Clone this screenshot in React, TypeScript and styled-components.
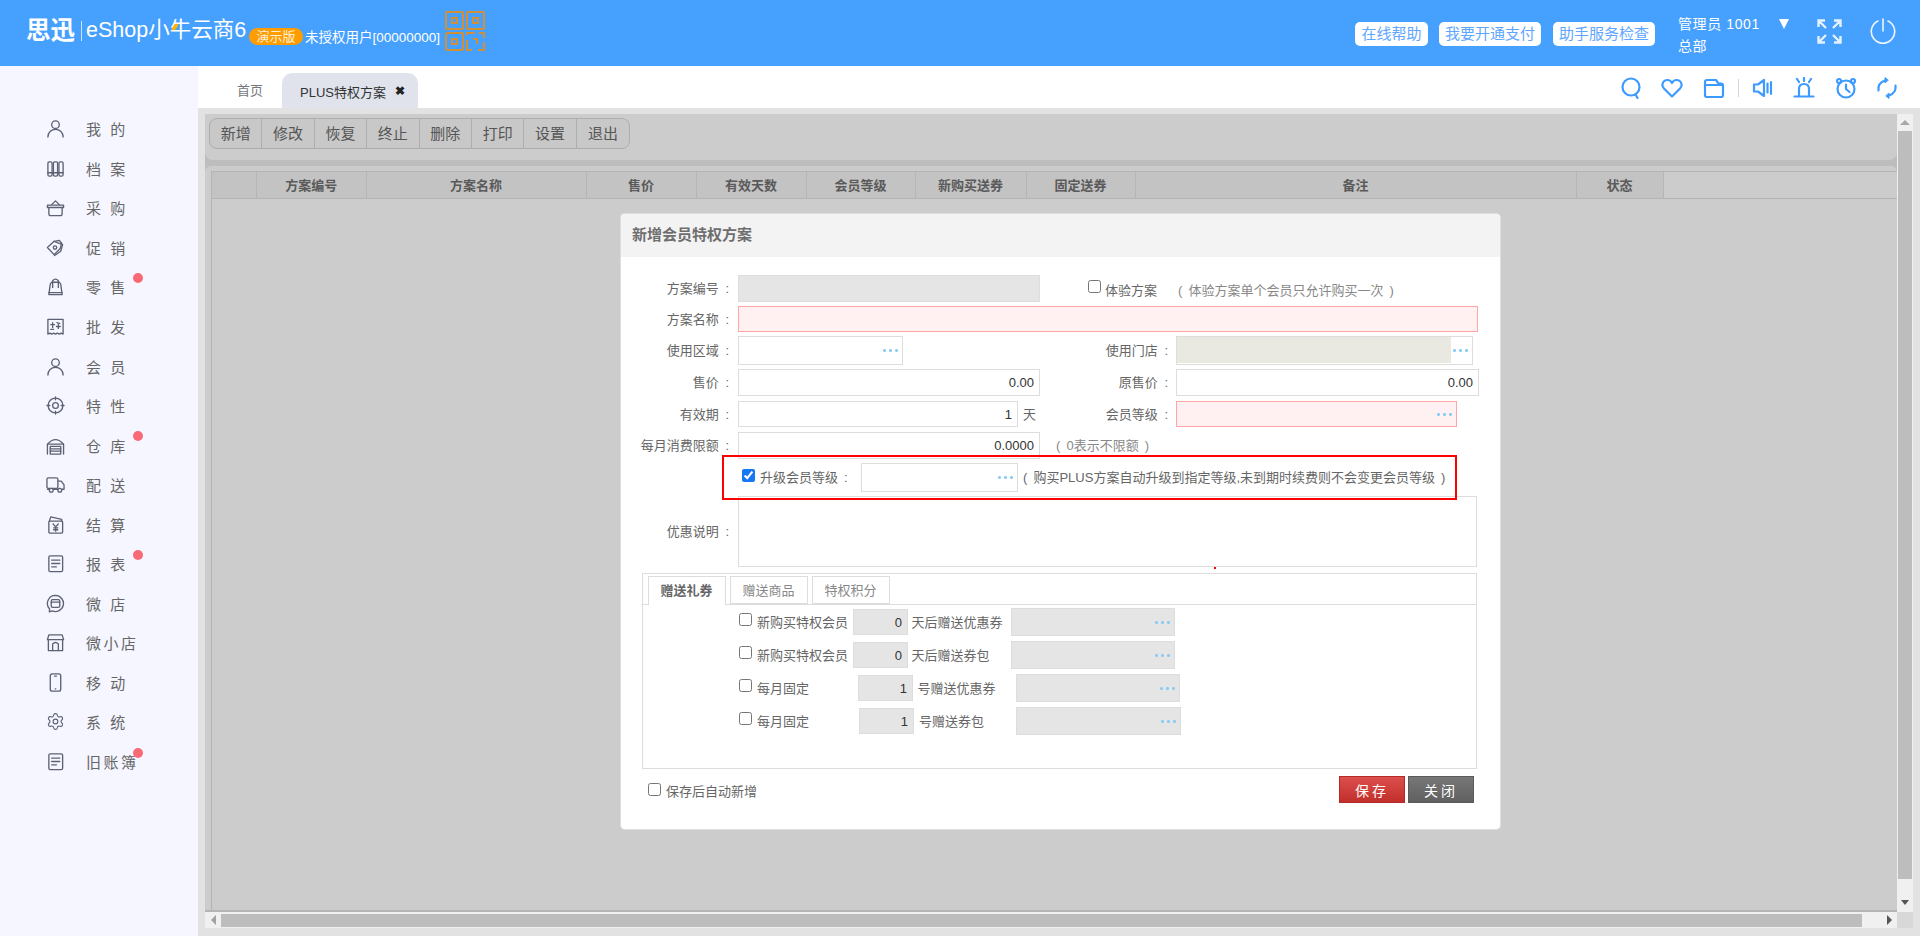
import React from "react";
import styled, { createGlobalStyle } from "styled-components";
import { Settings } from "lucide-react";

const Global = createGlobalStyle`
  html, body { margin: 0; padding: 0; height: 100%; overflow: hidden; }
  body { font-family: "Liberation Sans", "Noto Sans CJK SC", sans-serif; font-size: 13px; color: #666; }
  * { box-sizing: border-box; }
`;

const Page = styled.div`
  position: relative; width: 1920px; height: 936px; overflow: hidden;
  display: grid; grid-template-rows: 66px 1fr;
`;
const Header = styled.header`
  display: flex; align-items: center; background: #46a0fe; color: #fff; padding: 0 24px 0 26px;
`;
const Brand = styled.div`
  position: relative; display: flex; align-items: center; font-size: 21.5px; height: 66px; padding-bottom: 4px;
`;
const BrandMark = styled.span`font-size: 24.5px; font-weight: 700; line-height: 1; width: 50px; white-space: nowrap;`;
const BrandDivider = styled.i`display: block; width: 1px; height: 20px; background: rgba(255,255,255,.7); margin: 0 4px 0 5px;`;
const BrandName = styled.span`line-height: 1; white-space: nowrap; width: 162px;`;
const Spark = styled.i`
  position: absolute; left: 147px; top: 23px; width: 4px; height: 8px; background: #ffb400;
  border-radius: 4px 0 4px 0; transform: rotate(25deg);
`;
const DemoBadge = styled.span`
  margin: 6px 0 0 1px; width: 54px; height: 17px; line-height: 17px; text-align: center; border-radius: 9px;
  background: #ff9d00; font-size: 13px; color: #fff1dc;
`;
const License = styled.span`margin: 6px 0 0 2px; font-size: 13.5px; white-space: nowrap; width: 140px;`;
const QrSvg = styled.svg`display: block; margin-top: -5px;`;
const HeaderRight = styled.div`margin-left: auto; display: flex; align-items: center;`;
const HelpButton = styled.span<{ $w: number; $ml?: number }>`
  width: ${(p) => p.$w}px; margin-left: ${(p) => p.$ml ?? 0}px; height: 24px; line-height: 24px; margin-top: 2px;
  background: #fff; border-radius: 5px; color: #5ea6ff; font-size: 15px; text-align: center; white-space: nowrap;
`;
const UserBlock = styled.div`
  width: 139px; margin-left: 23px; display: flex; flex-direction: column; font-size: 14px; line-height: 22px; margin-top: 4px;
`;
const UserLine = styled.div`display: flex; align-items: center; letter-spacing: .6px; white-space: nowrap;`;
const Caret = styled.i`
  margin-left: 19px; width: 0; height: 0; border-left: 5px solid transparent; border-right: 5px solid transparent; border-top: 10px solid #fff;
`;
const HeaderIcon = styled.svg<{ $ml?: number }>`display: block; margin-left: ${(p) => p.$ml ?? 0}px; margin-top: -4px;`;

const Body = styled.div`display: flex; min-height: 0;`;
const Sidebar = styled.nav`width: 198px; flex: none; background: #f5f6ff; padding-top: 43px;`;
const NavItem = styled.div`
  position: relative; display: flex; align-items: center; height: 39.56px; padding-left: 46px;
  font-size: 15px; letter-spacing: 2.5px; color: #666; white-space: pre;
`;
const NavIconBox = styled.svg`
  width: 19px; height: 19px; flex: none; margin-right: 21px; fill: none; stroke: #5d6173; stroke-width: 1.4;
  stroke-linecap: round; stroke-linejoin: round;
`;
const NavLucide = styled.span`display: flex; width: 19px; flex: none; margin-right: 21px; color: #5d6173;`;
const NavDot = styled.i`
  position: absolute; left: 133px; top: 6px; width: 10px; height: 10px; border-radius: 50%; background: #f96a75;
`;

const Main = styled.main`flex: 1; min-width: 0; display: flex; flex-direction: column;`;
const TabBar = styled.div`display: flex; align-items: flex-end; height: 42px; background: #fff; padding-right: 22px;`;
const HomeTab = styled.div`width: 84px; height: 35px; line-height: 36px; padding-left: 39px; font-size: 13px; color: #777;`;
const ActiveTab = styled.div`
  width: 136px; height: 35px; display: flex; align-items: center; padding-left: 18px; background: #e0e3ec;
  border-radius: 10px 10px 0 0; font-size: 13px; color: #333; white-space: nowrap; padding-top: 1px;
`;
const TabClose = styled.b`margin-left: 9px; font-size: 12px; color: #222;`;
const Tools = styled.div`margin-left: auto; align-self: center; display: flex; align-items: center; gap: 19.5px; margin-top: 2px;`;
const ToolIcon = styled.svg`
  display: block; width: 22px; height: 22px; fill: none; stroke: #3d9bff; stroke-width: 2.2; stroke-linecap: round; stroke-linejoin: round;
`;
const ToolDivider = styled.i`display: block; width: 1px; height: 18px; background: #d5d5d5; margin: 0 -6.5px;`;

const Workspace = styled.div`
  flex: 1; min-height: 0; background: #e2e2e2; padding: 6px 7px 8px 7px;
  display: grid; grid-template-columns: 1fr 16px; grid-template-rows: 1fr 16px;
`;
const Stage = styled.div`background: #bdbdbd; display: flex; flex-direction: column; gap: 6px; min-width: 0;`;
const ToolbarPanel = styled.div`height: 46px; background: #ccc; border-radius: 0 0 8px 8px; padding: 4px;`;
const ButtonGroup = styled.div`
  display: inline-flex; height: 31px; border: 1px solid #aeaeae; border-radius: 8px; background: #c8c8c8; overflow: hidden;
`;
const ToolButton = styled.div`
  width: 52.4px; line-height: 30px; text-align: center; font-size: 15px; color: #555; border-right: 1px solid #aeaeae;
  &:last-child { border-right: 0; }
`;
const TablePanel = styled.div`
  flex: 1; background: #ccc; border-radius: 6px 6px 0 0; padding: 5px 0 0 6px; display: flex; flex-direction: column; min-height: 0;
  border-bottom: 2px solid #b4b4b4;
`;
const TableHead = styled.div`
  display: flex; height: 28px; border-top: 1px solid #b4b4b4; border-bottom: 1px solid #b4b4b4; border-left: 1px solid #b4b4b4;
`;
const HeadCell = styled.div<{ $w: number }>`
  width: ${(p) => p.$w}px; flex: none; background: #c3c3c3; border-right: 1px solid #b6b6b6; line-height: 27px;
  text-align: center; font-size: 13px; font-weight: 700; color: #5a5a5a;
`;
const TableBody = styled.div`flex: 1; border-left: 1px solid #b4b4b4;`;
const VScroll = styled.div`background: #f0f0f0; display: flex; flex-direction: column; align-items: center;`;
const ArrowBox = styled.div<{ $h?: number }>`width: 16px; height: ${(p) => p.$h ?? 17}px; flex: none; display: flex; align-items: center; justify-content: center;`;
const VThumb = styled.div`width: 14px; height: 748px; background: #bdbdbd; flex: none;`;
const ArrowUp = styled.i`border-left: 5px solid transparent; border-right: 5px solid transparent; border-bottom: 5px solid #a8a8a8;`;
const ArrowDown = styled.i`border-left: 4px solid transparent; border-right: 4px solid transparent; border-top: 5px solid #555;`;
const ArrowLeft = styled.i`border-top: 5px solid transparent; border-bottom: 5px solid transparent; border-right: 5px solid #a0a0a0;`;
const ArrowRight = styled.i`border-top: 5px solid transparent; border-bottom: 5px solid transparent; border-left: 5px solid #555;`;
const VSpacer = styled.div`flex: 1;`;
const HScroll = styled.div`background: #f0f0f0; display: flex; align-items: center;`;
const HThumb = styled.div`width: 1641px; height: 13px; background: #bdbdbd; flex: none; margin-top: 1px;`;
const Corner = styled.div`background: #d8d8d8;`;

const Modal = styled.section`
  position: absolute; left: 621px; top: 214px; width: 879px; height: 615px; background: #fff; border-radius: 4px;
  box-shadow: 0 0 0 1px #dedede; display: flex; flex-direction: column; overflow: hidden;
`;
const ModalTitle = styled.h2`
  margin: 0; height: 43px; background: #f3f3f3; padding-left: 11px; font-size: 15px; font-weight: 700; line-height: 41px; color: #6e6e6e;
`;
const Form = styled.div`padding-top: 18px; display: flex; flex-direction: column;`;
const Row = styled.div<{ $h: number; $mt?: number }>`
  display: flex; align-items: center; flex: none; height: ${(p) => p.$h}px; margin-top: ${(p) => p.$mt ?? 0}px;
`;
const Cell = styled.div`display: flex; align-items: center; width: 447px; flex: none; height: 100%;`;
const Label = styled.label<{ $w?: number }>`
  width: ${(p) => p.$w ?? 108}px; flex: none; margin-right: ${(p) => (p.$w ? 8 : 9)}px; text-align: right; font-size: 13px; color: #666;
  word-spacing: 3px; white-space: nowrap; padding-bottom: 2px;
`;
const Field = styled.input<{ $w: number; $tone?: "plain" | "gray" | "pink" }>`
  width: ${(p) => p.$w}px; height: 100%; flex: none; margin: 0; padding: 0 5px; outline: 0; text-align: right;
  font: 13px "Liberation Sans", "Noto Sans CJK SC", sans-serif; color: #333;
  background: ${(p) => (p.$tone === "gray" ? "#e5e5e5" : p.$tone === "pink" ? "#fff1f1" : "#fff")};
  border: 1px solid ${(p) => (p.$tone === "pink" ? "#ffa5a5" : "#ddd")};
`;
const Picker = styled.div<{ $w: number; $tone?: "plain" | "gray" | "pink" }>`
  width: ${(p) => p.$w}px; height: 100%; flex: none; display: flex; align-items: center;
  background: ${(p) => (p.$tone === "gray" ? "#e5e5e5" : p.$tone === "pink" ? "#fff1f1" : "#fff")};
  border: 1px solid ${(p) => (p.$tone === "pink" ? "#ffa5a5" : "#ddd")};
`;
const PickerFill = styled.div<{ $fill?: boolean }>`
  flex: 1; align-self: stretch; margin-bottom: 1px; background: ${(p) => (p.$fill ? "#e9e9e1" : "transparent")};
`;
const Dots = styled.i`
  display: block; width: 15px; height: 3px; flex: none; margin: 0 4px 0 2px;
  background: radial-gradient(circle at 1.5px 1.5px, #8accf5 1.3px, transparent 1.6px) 0 0 / 6px 3px repeat-x;
`;
const Check = styled.input.attrs({ type: "checkbox" })<{ $ml?: number }>`
  flex: none; margin: 0 ${(p) => (p.$ml !== undefined ? 4 : 5)}px 5px ${(p) => p.$ml ?? 0}px; accent-color: #1877f2;
`;
const Plain = styled.span<{ $ml?: number; $w?: number; $muted?: boolean; $low?: boolean }>`
  flex: none; margin-left: ${(p) => p.$ml ?? 0}px; ${(p) => (p.$w ? `width: ${p.$w}px;` : "")}
  font-size: 13px; white-space: nowrap; color: ${(p) => (p.$muted ? "#888" : "#666")};
  word-spacing: 2.5px; ${(p) => (p.$low ? "padding-top: 2px;" : "padding-bottom: 2px;")}
`;
const UpgradeCheck = styled.div`display: flex; align-items: center; width: 240px; padding-left: 121px; flex: none; margin-right: 0;`;
const Highlight = styled.div`
  position: absolute; left: 101px; top: 241px; width: 735px; height: 45px; border: 2px solid #f00; pointer-events: none;
`;
const Speck = styled.i`position: absolute; left: 593px; top: 353px; width: 2px; height: 2px; background: #f00;`;
const Area = styled.textarea`
  width: 739px; height: 100%; flex: none; margin: 0; padding: 4px; resize: none; outline: 0; background: #fff; border: 1px solid #ddd;
`;
const TabsBox = styled.div`
  margin: 6px 0 0 21px; width: 835px; height: 196px; border: 1px solid #ddd; flex: none;
`;
const TabStrip = styled.div`
  display: flex; gap: 4px; height: 31px; padding: 2px 0 0 4.5px; border-bottom: 1px solid #ddd;
`;
const TabItem = styled.div<{ $active?: boolean }>`
  width: 78px; height: ${(p) => (p.$active ? 29 : 28)}px; line-height: 27px; text-align: center; background: #fff;
  border: 1px solid #ddd; ${(p) => (p.$active ? "border-bottom: 0;" : "")}
  font-size: 13px; font-weight: ${(p) => (p.$active ? 700 : 400)}; color: ${(p) => (p.$active ? "#666" : "#888")};
`;
const GiftList = styled.div`display: flex; flex-direction: column; gap: 5px; padding: 3px 0 0 96px;`;
const GiftRow = styled.div`display: flex; align-items: center; height: 28px;`;
const GiftCheck = styled.div<{ $w: number }>`display: flex; align-items: center; width: ${(p) => p.$w}px; flex: none;`;
const GiftNum = styled(Field)`height: 26px; background: #e5e5e5;`;
const GiftText = styled(Plain)``;
const Footer = styled.div`
  display: flex; align-items: center; justify-content: space-between; height: 27px; margin-top: 7px; padding: 0 26px 0 27px;
`;
const FooterLeft = styled.div`display: flex; align-items: center; padding-top: 4px;`;
const FooterButtons = styled.div`display: flex; gap: 3px;`;
const ActionButton = styled.button<{ $danger?: boolean }>`
  width: 66px; height: 27px; padding: 0; border-radius: 0; font: 14px "Liberation Sans", "Noto Sans CJK SC", sans-serif;
  letter-spacing: 3px; color: #fff;
  border: 1px solid ${(p) => (p.$danger ? "#b42b29" : "#5a5a5a")};
  background: ${(p) => (p.$danger ? "linear-gradient(#dc4f4d,#c22f2b)" : "linear-gradient(#777,#606060)")};
`;

const NavIcon = ({ name }: { name: string }) => {
  const parts: Record<string, React.ReactNode> = {
    person: <><circle cx="10" cy="6" r="4" /><path d="M2 19c0-5 3.5-8 8-8s8 3 8 8" /></>,
    books: <><rect x="2" y="3" width="4.4" height="15" rx="1.5" /><rect x="7.8" y="3" width="4.4" height="15" rx="1.5" /><rect x="13.6" y="3" width="4.4" height="15" rx="1.5" /><path d="M2 14.5h16" /></>,
    basket: <><path d="M6 7l4-4 4 4" /><path d="M1.5 7.5h17v2.5h-17z" /><path d="M3 10v6.5Q3 18.5 5 18.5h10q2 0 2-2V10" /></>,
    tag: <><path d="M1.5 10L8.5 3.5 14 2.5 16.5 5.5 15 11 8.5 17.5z" /><path d="M8.5 3.5l9 3.5-2 7-6.5 4.5" /><circle cx="9.5" cy="10" r="1.8" /></>,
    bag: <><path d="M4.5 7.5L6 5.5h8l1.5 2L17 18.5H3z" /><path d="M7 11V4q3-3.5 6 0v7" /><path d="M3 16.5h14" /></>,
    bill: <><path d="M2 2.5h16v15.5l-2-1-2 1-2-1-2 1-2-1-2 1-2-1-2 1z" /><path d="M5 8h4M7 6v5M11.5 6l3 1M11 10h4M13 8v4M5 13h3" /></>,
    target: <><circle cx="10" cy="10" r="7.8" /><circle cx="10" cy="10" r="3" /><path d="M10 1v3M10 16v3M1 10h3M16 10h3" /></>,
    house: <><path d="M1.5 19V8.5Q10-1 18.5 8.5V19" /><path d="M2 8.5h16" /><rect x="4.5" y="11" width="11" height="8" /><path d="M4.5 13.5h11M4.5 16h11" /></>,
    truck: <><rect x="1" y="3" width="11.5" height="11" rx="1.5" /><path d="M12.5 6.5h3.5l3 4v4.5h-2M12.5 15H8M3 15H1.5" /><circle cx="5.5" cy="16" r="2" /><circle cx="14.5" cy="16" r="2" /></>,
    wallet: <><rect x="3" y="6.5" width="14.5" height="12.5" rx="1" /><path d="M3.5 6.5L5 2l11.5 2.5v2" /><path d="M7.5 9.5l2.7 3 2.7-3M10.2 12.5V17M8 13.5h4.4M8 15.5h4.4" /></>,
    report: <><rect x="3" y="2" width="14.5" height="16.5" rx="1.5" /><path d="M6 6.5h8.5M6 10h8.5M6 13.5h5" /></>,
    chat: <><path d="M10 1.5a8.5 8.5 0 1 1-3.5 16.3L3.5 18.8l.3-3A8.5 8.5 0 0 1 10 1.5z" /><rect x="5.5" y="6" width="9" height="8" rx="1.5" /><path d="M5.5 8.5h9" /></>,
    shop: <><path d="M3 2h14l1.5 5H1.5z" /><path d="M2.5 7v11.5h15V7" /><path d="M7 18.500V11.500q3-3 6 0v7" /></>,
    phone: <><rect x="4.500" y="1" width="11" height="18" rx="2" /><path d="M9 3.200h2M9.700 16.700h.6" /></>,
  };
  return <NavIconBox viewBox="0 0 20 20">{parts[name]}</NavIconBox>;
};

const nav = [
  ["person", "我 的", 0], ["books", "档 案", 0], ["basket", "采 购", 0], ["tag", "促 销", 0], ["bag", "零 售", 1],
  ["bill", "批 发", 0], ["person", "会 员", 0], ["target", "特 性", 0], ["house", "仓 库", 1], ["truck", "配 送", 0],
  ["wallet", "结 算", 0], ["report", "报 表", 1], ["chat", "微 店", 0], ["shop", "微小店", 0], ["phone", "移 动", 0],
  ["gear", "系 统", 0], ["report", "旧账簿", 1],
] as const;

const heads: [string, number][] = [
  ["", 45], ["方案编号", 109.5], ["方案名称", 220], ["售价", 110], ["有效天数", 110], ["会员等级", 109],
  ["新购买送券", 111], ["固定送券", 109], ["备注", 441], ["状态", 87],
];

const toolbar = ["新增", "修改", "恢复", "终止", "删除", "打印", "设置", "退出"];

const gifts = [
  { label: "新购买特权会员", cell: 114, value: "0", text: "天后赠送优惠券", ml: 3.5, tw: 99 },
  { label: "新购买特权会员", cell: 114, value: "0", text: "天后赠送券包", ml: 3.5, tw: 99 },
  { label: "每月固定", cell: 119, value: "1", text: "号赠送优惠券", ml: 4.5, tw: 98 },
  { label: "每月固定", cell: 120, value: "1", text: "号赠送券包", ml: 5, tw: 97 },
];

const QrIcon = () => (
  <QrSvg width="40" height="40" viewBox="0 0 40 40" fill="none" stroke="#d18f38" strokeWidth="2">
    <rect x="1" y="1" width="17" height="17" rx="1" /><rect x="7" y="7" width="5" height="5" />
    <rect x="22" y="1" width="17" height="17" rx="1" /><rect x="28" y="7" width="5" height="5" />
    <rect x="1" y="22" width="17" height="17" rx="1" /><rect x="7" y="28" width="5" height="5" />
    <path d="M22 24v-2h8M34 22h5v5M22 29v10h5M28 28h4v5M39 31v8h-6" />
  </QrSvg>
);

export default function App() {
  return (
    <Page>
      <Global />
      <Header>
        <Brand>
          <BrandMark>思迅</BrandMark>
          <BrandDivider />
          <BrandName>eShop小牛云商6</BrandName>
          <Spark />
        </Brand>
        <DemoBadge>演示版</DemoBadge>
        <License>未授权用户[00000000]</License>
        <QrIcon />
        <HeaderRight>
          <HelpButton $w={73}>在线帮助</HelpButton>
          <HelpButton $w={102} $ml={11}>我要开通支付</HelpButton>
          <HelpButton $w={102} $ml={12}>助手服务检查</HelpButton>
          <UserBlock>
            <UserLine>管理员 1001<Caret /></UserLine>
            <UserLine>总部</UserLine>
          </UserBlock>
          <HeaderIcon width="25" height="25" viewBox="0 0 25 25" fill="none" stroke="#e6f1fe" strokeWidth="2.4">
            <path d="M1.500 8V1.500H8M1.500 1.500L9 9M17 1.500h6.500V8M23.500 1.500L16 9M1.500 17v6.500H8M1.500 23.500L9 16M17 23.500h6.500V17M23.500 23.500L16 16" />
          </HeaderIcon>
          <HeaderIcon $ml={28} width="26" height="26" viewBox="0 0 26 26" fill="none" stroke="#eef6ff" strokeWidth="1.6" strokeLinecap="round">
            <path d="M8 3a11.700 11.700 0 1 0 10 0" /><path d="M13 1v12" />
          </HeaderIcon>
        </HeaderRight>
      </Header>
      <Body>
        <Sidebar>
          {nav.map(([icon, label, dot], i) => (
            <NavItem key={i}>
              {icon === "gear" ? (
                <NavLucide><Settings size={19} strokeWidth={1.4} /></NavLucide>
              ) : (
                <NavIcon name={icon} />
              )}
              {label}
              {dot ? <NavDot /> : null}
            </NavItem>
          ))}
        </Sidebar>
        <Main>
          <TabBar>
            <HomeTab>首页</HomeTab>
            <ActiveTab>PLUS特权方案<TabClose>✖</TabClose></ActiveTab>
            <Tools>
              <ToolIcon viewBox="0 0 22 22"><circle cx="11" cy="10" r="8.500" /><path d="M15.500 17.500l2 3.500" /></ToolIcon>
              <ToolIcon viewBox="0 0 22 22"><path d="M11 19.500L3 11.500Q1 9.500 1.500 7 2.500 3 6.500 3 9.500 3 11 6 12.500 3 15.500 3 19.500 3 20.500 7 21 9.500 19 11.500z" /></ToolIcon>
              <ToolIcon viewBox="0 0 22 22"><path d="M2 5q0-2 2-2h9l2.500 3.500H18q2 0 2 2V18q0 2-2 2H4q-2 0-2-2zM2 8h18" /></ToolIcon>
              <ToolDivider />
              <ToolIcon viewBox="0 0 22 22"><path d="M2 7.500h4L12 3v16l-6-4.500H2z" /><path d="M15.500 6.500v9M19 5v12" /></ToolIcon>
              <ToolIcon viewBox="0 0 22 22"><path d="M6 19v-7q0-5 5-5t5 5v7M1.500 19.500h19M4 2l2 3M11 1v3M18 2l-2 3" /></ToolIcon>
              <ToolIcon viewBox="0 0 22 22"><circle cx="11" cy="12" r="8.500" /><path d="M11 7.500V12l3.500 3" /><circle cx="4" cy="4" r="2" /><circle cx="18" cy="4" r="2" /></ToolIcon>
              <ToolIcon viewBox="0 0 22 22"><path d="M2.500 13.500Q1.500 6 9 3.500M19.500 8.500Q20.500 16 13 18.500" /><path d="M12 3l-3-2.500v5zM10 19l3 2.500v-5z" fill="#3d9bff" strokeWidth="1" /></ToolIcon>
            </Tools>
          </TabBar>
          <Workspace>
            <Stage>
              <ToolbarPanel>
                <ButtonGroup>
                  {toolbar.map((t) => <ToolButton key={t}>{t}</ToolButton>)}
                </ButtonGroup>
              </ToolbarPanel>
              <TablePanel>
                <TableHead>
                  {heads.map(([t, w], i) => <HeadCell key={i} $w={w}>{t}</HeadCell>)}
                </TableHead>
                <TableBody />
              </TablePanel>
            </Stage>
            <VScroll>
              <ArrowBox><ArrowUp /></ArrowBox>
              <VThumb />
              <VSpacer />
              <ArrowBox $h={20}><ArrowDown /></ArrowBox>
            </VScroll>
            <HScroll>
              <ArrowBox><ArrowLeft /></ArrowBox>
              <HThumb />
              <VSpacer />
              <ArrowBox $h={16}><ArrowRight /></ArrowBox>
            </HScroll>
            <Corner />
          </Workspace>
        </Main>
      </Body>
      <Modal>
        <ModalTitle>新增会员特权方案</ModalTitle>
        <Form>
          <Row $h={27}>
            <Cell><Label>方案编号 :</Label><Field $w={302} $tone="gray" readOnly /></Cell>
            <Check $ml={20} />
            <Plain $low>体验方案</Plain>
            <Plain $low $ml={21} $muted>( 体验方案单个会员只允许购买一次 )</Plain>
          </Row>
          <Row $h={26} $mt={4}>
            <Label>方案名称 :</Label><Field $w={740} $tone="pink" readOnly />
          </Row>
          <Row $h={29} $mt={4}>
            <Cell><Label>使用区域 :</Label><Picker $w={165}><PickerFill /><Dots /></Picker></Cell>
            <Label $w={100}>使用门店 :</Label>
            <Picker $w={297}><PickerFill $fill /><Dots /></Picker>
          </Row>
          <Row $h={27} $mt={4}>
            <Cell><Label>售价 :</Label><Field $w={302} readOnly value="0.00" /></Cell>
            <Label $w={100}>原售价 :</Label>
            <Field $w={303} readOnly value="0.00" />
          </Row>
          <Row $h={26} $mt={5}>
            <Cell><Label>有效期 :</Label><Field $w={280} readOnly value="1" /><Plain $ml={5}>天</Plain></Cell>
            <Label $w={100}>会员等级 :</Label>
            <Picker $w={281} $tone="pink"><PickerFill /><Dots /></Picker>
          </Row>
          <Row $h={27} $mt={5}>
            <Cell><Label>每月消费限额 :</Label><Field $w={302} readOnly value="0.0000" /><Plain $ml={16} $muted>( 0表示不限额 )</Plain></Cell>
          </Row>
          <Row $h={29} $mt={4}>
            <UpgradeCheck>
              <Check defaultChecked />
              <Plain>升级会员等级 :</Plain>
            </UpgradeCheck>
            <Picker $w={157}><PickerFill /><Dots /></Picker>
            <Plain $ml={5}>( 购买PLUS方案自动升级到指定等级,未到期时续费则不会变更会员等级 )</Plain>
          </Row>
          <Row $h={71} $mt={4}>
            <Label>优惠说明 :</Label><Area readOnly />
          </Row>
          <TabsBox>
            <TabStrip>
              <TabItem $active>赠送礼券</TabItem>
              <TabItem>赠送商品</TabItem>
              <TabItem>特权积分</TabItem>
            </TabStrip>
            <GiftList>
              {gifts.map((g, i) => (
                <GiftRow key={i}>
                  <GiftCheck $w={g.cell}><Check /><Plain>{g.label}</Plain></GiftCheck>
                  <GiftNum $w={55} readOnly value={g.value} />
                  <GiftText $ml={g.ml} $w={g.tw}>{g.text}</GiftText>
                  <Picker $w={164.5} $tone="gray"><PickerFill /><Dots /></Picker>
                </GiftRow>
              ))}
            </GiftList>
          </TabsBox>
          <Footer>
            <FooterLeft><Check /><Plain>保存后自动新增</Plain></FooterLeft>
            <FooterButtons>
              <ActionButton $danger>保存</ActionButton>
              <ActionButton>关闭</ActionButton>
            </FooterButtons>
          </Footer>
        </Form>
        <Highlight />
        <Speck />
      </Modal>
    </Page>
  );
}
